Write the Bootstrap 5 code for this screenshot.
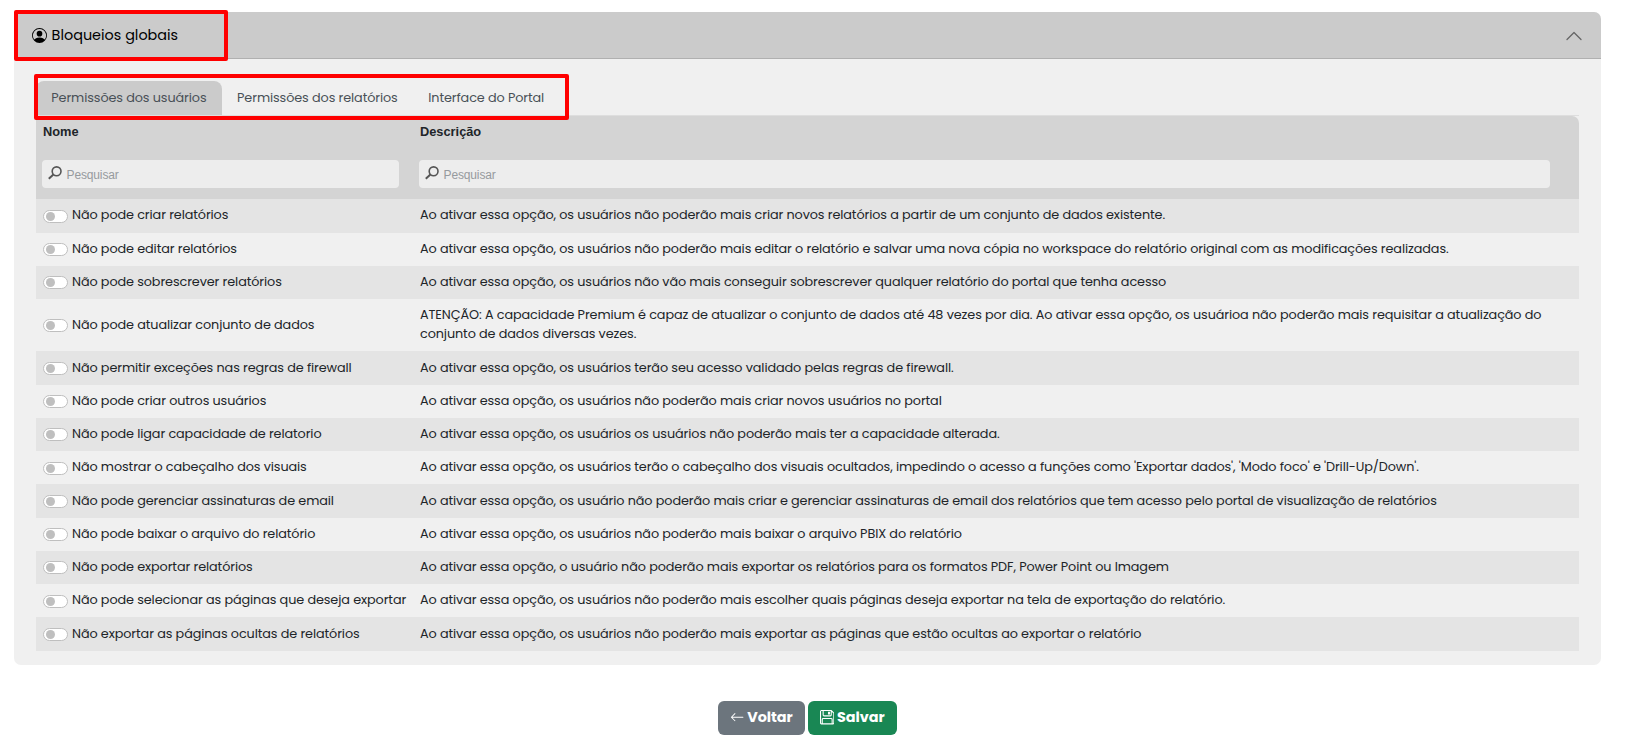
<!DOCTYPE html>
<html lang="pt-BR">
<head>
<meta charset="utf-8">
<meta name="viewport" content="width=device-width, initial-scale=1">
<title>Bloqueios globais</title>
<link href="https://cdn.jsdelivr.net/npm/bootstrap@5.3.0/dist/css/bootstrap.min.css" rel="stylesheet">
<style>
body{font-family:Poppins,Inter,sans-serif;font-size:12.8px;line-height:19.2px;color:#212529;background:#fff;overflow:hidden}
.page-wrap{padding:12px 36px 0 14px}
.panel{background:#f0f0f0;border-radius:7px;height:653px}
.panel-top{background:#cbcbcb;height:47px;border-bottom:1px solid #b0b0b0;border-radius:7px 7px 0 0;padding:2px 19px 0 18px;color:#000;font-size:14.4px}
.panel-top span{margin-left:4.6px}
.panel-inner{padding:22px 22px 0}
.tabs-bar{--bs-nav-tabs-border-color:#dedede;height:35px}
.tabs-bar .nav-link{height:34px;padding:7px 15.3px;border:0;border-radius:8px 8px 0 0;color:#495057;margin:0;letter-spacing:-.1px}
.tabs-bar .nav-link.active{background:#cbcbcb;color:#495057}
.grid-table{table-layout:fixed;border-collapse:separate;border-spacing:0;width:1543px}
.grid-table th{background:#d4d4d4;padding:6px 8px 0;height:83.3px;vertical-align:top;font-family:"Liberation Sans",sans-serif;font-size:12.8px}
.grid-table th:last-child{border-top-right-radius:7px}
.col-name{width:376px}
.grid-table td{padding:0 8px 1.7px;height:33.25px;vertical-align:middle;white-space:nowrap;letter-spacing:-.1px}
.grid-table th:first-child,.grid-table td:first-child{padding-left:7px}
.grid-table tr.tall td{height:52.4px}
.grid-table tbody tr:nth-child(odd) td{background:#e4e4e4}
.find{background:#ededed;border-radius:4px;height:28px;margin:19px 5px 0 -1px;padding-left:6px;font-weight:400;color:#969a9e}
.find.wide{margin-right:21px}
.find span{font-size:12px;letter-spacing:-.15px;padding-top:2px;margin-left:4.6px}
.find svg{margin-top:-2px}
.switch{width:25px;height:13px;border:1px solid #bfbfbf;border-radius:7px;background:#fff;padding:1px;margin-right:4px;margin-top:2.4px}
.switch::before{content:"";display:block;width:9px;height:9px;border-radius:50%;background:#bfbfbf;margin-left:1px}
.actions{gap:3px;padding:36px 0 0}
.btn.act{height:34px;padding:0 12px;border:0;border-radius:6px;font-size:14.4px;font-weight:700;letter-spacing:-.05px}
.btn.act svg{margin-right:3px;margin-top:-1px}
.btn-secondary.act svg{margin-right:2.4px}
.mark-box{position:absolute;border:4px solid #f00;border-radius:2px;pointer-events:none}
.mark-a{left:13.6px;top:10.4px;width:214px;height:51px}
.mark-b{left:34.4px;top:74px;width:535px;height:45.6px}
.chevron{margin-bottom:1px}
</style>
</head>
<body>
<main class="page-wrap">
  <section class="panel">
    <header class="panel-top d-flex align-items-center justify-content-between">
      <div class="d-flex align-items-center">
        <svg width="15" height="15" viewBox="0 0 16 16" fill="currentColor"><path d="M11 6a3 3 0 1 1-6 0 3 3 0 0 1 6 0z"/><path fill-rule="evenodd" d="M0 8a8 8 0 1 1 16 0A8 8 0 0 1 0 8zm8-7a7 7 0 0 0-5.468 11.37C3.242 11.226 4.805 10 8 10s4.757 1.225 5.468 2.37A7 7 0 0 0 8 1z"/></svg>
        <span>Bloqueios globais</span>
      </div>
      <svg class="chevron" width="16" height="16" viewBox="0 0 16 16" fill="none" stroke="#666" stroke-width="1.3" stroke-linecap="round" stroke-linejoin="round"><path d="M1 11.5l7-7 7 7"/></svg>
    </header>
    <div class="panel-inner">
      <ul class="nav nav-tabs tabs-bar">
        <li class="nav-item"><a class="nav-link active" href="#">Permissões dos usuários</a></li>
        <li class="nav-item"><a class="nav-link" href="#">Permissões dos relatórios</a></li>
        <li class="nav-item"><a class="nav-link" href="#">Interface do Portal</a></li>
      </ul>
      <table class="grid-table">
        <thead>
          <tr>
            <th class="col-name">Nome
              <div class="find d-flex align-items-center"><svg width="14" height="14" viewBox="0 0 14 14" fill="none" stroke="#555" stroke-width="1.6"><circle cx="8.6" cy="5.3" r="4.4"/><path stroke-width="2" d="M5.4 8.6L.8 12.8"/></svg><span>Pesquisar</span></div>
            </th>
            <th>Descrição
              <div class="find wide d-flex align-items-center"><svg width="14" height="14" viewBox="0 0 14 14" fill="none" stroke="#555" stroke-width="1.6"><circle cx="8.6" cy="5.3" r="4.4"/><path stroke-width="2" d="M5.4 8.6L.8 12.8"/></svg><span>Pesquisar</span></div>
            </th>
          </tr>
        </thead>
        <tbody id="rules"></tbody>
      </table>
    </div>
  </section>
  <div class="actions d-flex justify-content-center">
    <button class="btn btn-secondary act d-flex align-items-center"><svg width="14.4" height="14.4" viewBox="0 0 16 16" fill="currentColor"><path fill-rule="evenodd" d="M15 8a.5.5 0 0 0-.5-.5H2.707l3.147-3.146a.5.5 0 1 0-.708-.708l-4 4a.5.5 0 0 0 0 .708l4 4a.5.5 0 0 0 .708-.708L2.707 8.5H14.5A.5.5 0 0 0 15 8z"/></svg>Voltar</button>
    <button class="btn btn-success act d-flex align-items-center"><svg width="14.4" height="14.4" viewBox="0 0 16 16" fill="none" stroke="currentColor" stroke-width="1.2"><path d="M1.5.6h11l2.9 2.9v11a.9.9 0 0 1-.9.9h-13a.9.9 0 0 1-.9-.9v-13a.9.9 0 0 1 .9-.9zM3.5.6v4.9a1 1 0 0 0 1 1h7a1 1 0 0 0 1-1V.6M2.5 15.4v-4.9a1 1 0 0 1 1-1h9a1 1 0 0 1 1 1v4.9M9.5 2.5h1v2h-1z"/></svg>Salvar</button>
  </div>
</main>
<div class="mark-box mark-a"></div>
<div class="mark-box mark-b"></div>
<script src="https://cdn.jsdelivr.net/npm/bootstrap@5.3.0/dist/js/bootstrap.bundle.min.js"></script>
<script>
const rules = [
 ["Não pode criar relatórios","Ao ativar essa opção, os usuários não poderão mais criar novos relatórios a partir de um conjunto de dados existente."],
 ["Não pode editar relatórios","Ao ativar essa opção, os usuários não poderão mais editar o relatório e salvar uma nova cópia no workspace do relatório original com as modificações realizadas."],
 ["Não pode sobrescrever relatórios","Ao ativar essa opção, os usuários não vão mais conseguir sobrescrever qualquer relatório do portal que tenha acesso"],
 ["Não pode atualizar conjunto de dados","ATENÇÃO: A capacidade Premium é capaz de atualizar o conjunto de dados até 48 vezes por dia. Ao ativar essa opção, os usuárioa não poderão mais requisitar a atualização do","conjunto de dados diversas vezes."],
 ["Não permitir exceções nas regras de firewall","Ao ativar essa opção, os usuários terão seu acesso validado pelas regras de firewall."],
 ["Não pode criar outros usuários","Ao ativar essa opção, os usuários não poderão mais criar novos usuários no portal"],
 ["Não pode ligar capacidade de relatorio","Ao ativar essa opção, os usuários os usuários não poderão mais ter a capacidade alterada."],
 ["Não mostrar o cabeçalho dos visuais","Ao ativar essa opção, os usuários terão o cabeçalho dos visuais ocultados, impedindo o acesso a funções como 'Exportar dados', 'Modo foco' e 'Drill-Up/Down'."],
 ["Não pode gerenciar assinaturas de email","Ao ativar essa opção, os usuário não poderão mais criar e gerenciar assinaturas de email dos relatórios que tem acesso pelo portal de visualização de relatórios"],
 ["Não pode baixar o arquivo do relatório","Ao ativar essa opção, os usuários não poderão mais baixar o arquivo PBIX do relatório"],
 ["Não pode exportar relatórios","Ao ativar essa opção, o usuário não poderão mais exportar os relatórios para os formatos PDF, Power Point ou Imagem"],
 ["Não pode selecionar as páginas que deseja exportar","Ao ativar essa opção, os usuários não poderão mais escolher quais páginas deseja exportar na tela de exportação do relatório."],
 ["Não exportar as páginas ocultas de relatórios","Ao ativar essa opção, os usuários não poderão mais exportar as páginas que estão ocultas ao exportar o relatório"]
];
document.getElementById("rules").innerHTML = rules.map(([name, ...lines]) =>
  `<tr${lines.length > 1 ? ' class="tall"' : ''}><td><div class="d-flex align-items-center"><span class="switch flex-shrink-0"></span><span>${name}</span></div></td><td>${lines.join("<br>")}</td></tr>`).join("");
</script>
</body>
</html>
